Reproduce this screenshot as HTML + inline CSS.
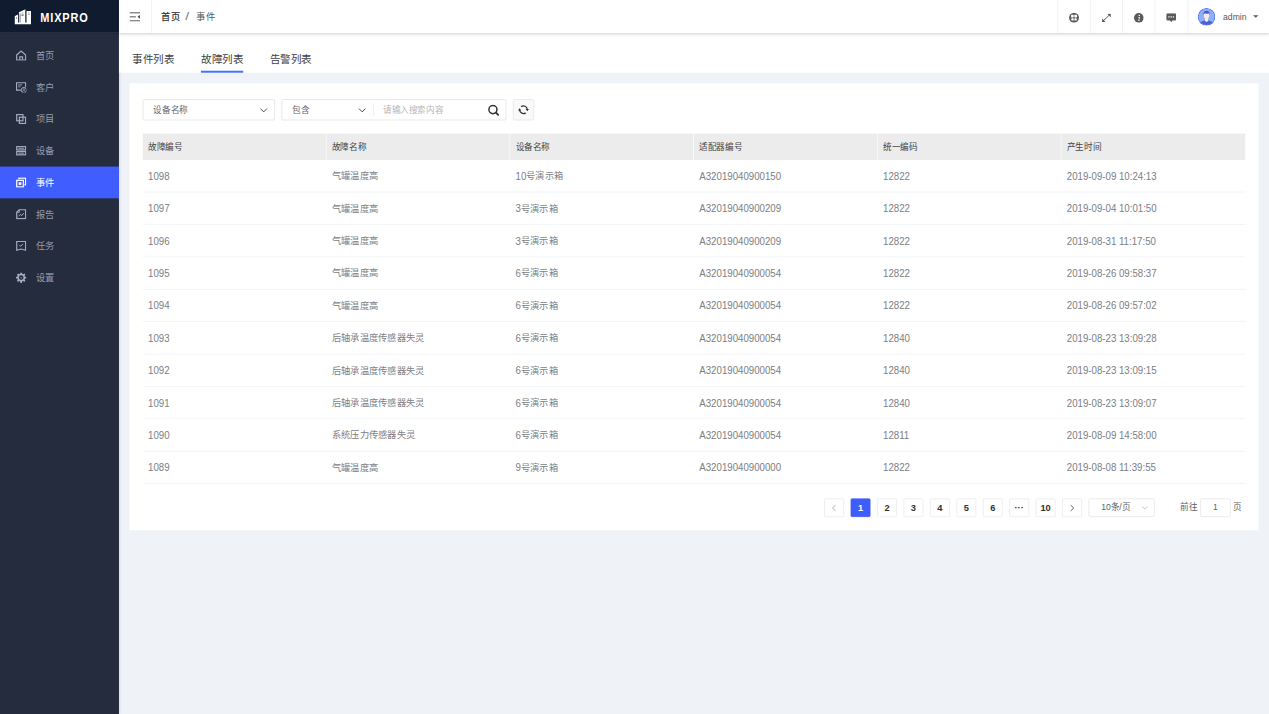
<!DOCTYPE html>
<html lang="zh-CN">
<head>
<meta charset="utf-8">
<title>MIXPRO</title>
<style>
*{box-sizing:border-box;margin:0;padding:0}
html,body{width:1269px;height:714px;overflow:hidden;background:#eff2f7}
body{font-family:"Liberation Sans",sans-serif;font-size:14px;color:#606266}
#app{position:absolute;left:0;top:0;width:1920px;height:1080px;transform-origin:0 0;transform:scale(0.66094,0.66111);background:#eff2f7;overflow:hidden}

/* sidebar */
.side{position:absolute;left:0;top:0;width:180px;height:1080px;background:#242c3d;box-shadow:1px 0 4px rgba(0,21,41,.10);z-index:1}
.logo{position:absolute;left:0;top:0;width:180px;height:48.600px;background:#111b2f;border-bottom:1.200px solid #323d52;box-sizing:content-box}
.logo svg{position:absolute;left:22px;top:13.500px}
.logo b{position:absolute;left:61px;top:13.500px;font-size:20px;line-height:26px;color:#fff;letter-spacing:1.500px;font-weight:bold;transform-origin:0 50%;transform:scaleX(.83);white-space:nowrap}
.menu{position:absolute;left:0;top:60px;width:180px;list-style:none}
.menu li{position:relative;height:48px;line-height:48px;color:#959db1;font-size:14px;padding-left:54px}
.menu li svg{position:absolute;left:24px;top:16px;color:#a3abbe}
.menu li.on svg{color:#fff}
.menu li.on{background:#405dff;color:#fff}

/* header */
.head{position:absolute;left:180px;top:0;width:1740px;height:50px;background:#fff;box-shadow:0 1px 3px rgba(0,0,0,.150),0 3px 8px rgba(0,0,0,.060);z-index:3}
.ham{position:absolute;left:0;top:0;width:49.500px;height:50px;border-right:1px solid #ececec}
.ham svg{position:absolute;left:16px;top:17.500px}
.crumb{position:absolute;left:64px;top:0;line-height:50px;font-size:14px;color:#303133;font-weight:normal;-webkit-text-stroke:.300px #303133;white-space:nowrap}
.crumb u{text-decoration:none;font-weight:normal;color:#55585e;-webkit-text-stroke:0}
.crumb i{font-style:normal;font-weight:normal;color:#70747c;margin:0 12px 0 8.500px;font-size:16px;display:inline-block;transform:scaleX(1.3);-webkit-text-stroke:0}
.hr{position:absolute;right:0;top:0;height:50px;display:flex}
.hr .c{width:49.200px;height:50px;border-left:1px solid #ececec;position:relative}
.hr .c svg{position:absolute;left:50%;top:26.500px;transform:translate(-50%,-50%)}
.hr .u{width:123.500px;height:50px;border-left:1px solid #ececec;position:relative}
.hr .u .av{position:absolute;left:14px;top:11.500px;width:27px;height:27px;border-radius:50%;overflow:hidden}
.hr .u .av svg{width:27px;height:27px;display:block}
.hr .u span{position:absolute;left:53px;top:1.500px;line-height:50px;font-size:13px;color:#55585e}
.hr .u em{position:absolute;left:98.500px;top:23px;border:4.400px solid transparent;border-top:4.600px solid #555;border-bottom:0}

/* tabs */
.tabs{position:absolute;left:180px;top:50px;width:1740px;height:60px;background:#fff;z-index:2}
.tabs span{position:absolute;top:29.500px;font-size:16px;line-height:22px;color:#3f4247}
.tabs .line{position:absolute;left:124px;top:57px;width:64px;height:3px;background:#4474f5}

/* card */
.card{position:absolute;left:196px;top:126px;width:1708px;height:676px;background:#fff}

.sel{position:absolute;top:24px;height:32px;border:1px solid #dedede;border-radius:2px;background:#fff;font-size:13px;line-height:30px;color:#64666a}
.sel span{position:absolute;left:15px;top:.500px}
.s1{left:20px;width:200px}
.s1>svg{position:absolute;left:176px;top:12px}
.s2{left:230px;width:340px}
.s2>svg{position:absolute;left:115px;top:12px}
.s2 i{position:absolute;left:138px;top:5px;width:1px;height:20px;background:#e6e6e6}
.s2 em{position:absolute;left:152.500px;top:.500px;font-style:normal;color:#b6b6b6}
.s2 .mag{position:absolute;left:311px;top:6.500px}
.ref{position:absolute;left:580px;top:24px;width:32px;height:32px;border:1px solid #e2e2e2;border-radius:2px;background:#f9f9f9}
.ref svg{position:absolute;left:6px;top:6px}
.tb{position:absolute;left:20px;top:76px;width:1668px;border-collapse:separate;border-spacing:0;table-layout:fixed}
.tb th{height:40px;background:#ececec;color:#43464b;font-size:13px;font-weight:normal;text-align:left;padding:0 0 2px 8px;border-right:1px solid #fff}
.tb th:last-child{border-right:0}
.tb td{height:49px;border-bottom:1px solid #ebeef5;padding:0 0 0 8px;font-size:14px;color:#6c6f76;text-align:left}
.tb td{color:#7d8086}
.tb td:not(.n){padding-bottom:3px}
.tb td.n{font-size:14.500px;color:#7b7e84}
.tb td s{display:inline-block;font-size:14.500px;text-decoration:none;transform-origin:0 50%;transform:translateY(.300px) scale(1.01,1.160)}
.pg{position:absolute;right:25px;top:628px;height:28px;display:flex;align-items:center;font-size:13px;color:#606266}
.pg b{min-width:30px;height:28px;line-height:26px;margin:0 5px;border:1px solid #e6e6e6;border-radius:2px;text-align:center;font-size:14px;color:#303133;background:#fff;padding:0 3px}
.pg b.on{background:#3f5dfb;border-color:#3f5dfb;color:#fff}
.pg b.ar{position:relative}
.pg b.ar svg{position:absolute;left:10px;top:8px}
.pg .sz{position:relative;width:100px;height:28px;line-height:26px;border:1px solid #e0e0e0;border-radius:3px;margin:0 10px 0 5px;padding-left:18px;color:#606266}
.pg .sz svg{position:absolute;right:9px;top:10px}
.pg .go{margin-left:29px;position:relative;top:-2px}
.pg .go2{position:relative;top:-2px}
.pg .ed{width:46px;height:28px;line-height:26px;border:1px solid #e0e0e0;border-radius:3px;text-align:center;margin:0 4px 0 4px}
</style>
</head>
<body>
<div id="app">
  <div class="side">
    <div class="logo"><svg width="25" height="23" viewBox="0 0 25 23"><path d="M0 10.5L5.2 8v12.5H0z M6.6 4.6L16.6 0v20.5H6.6z M18 2.6h7V20.5h-7z M0 20h25v3H0z" fill="#fff"/><path d="M2.2 12.6h1.4v1.6H2.2z M10.6 5.2h3v1h-3z M10.6 7h3v1h-3z M10.6 8.8h3v1h-3z M20.6 5.2h2.4v1h-2.4z M20.6 7h2.4v1h-2.4z" fill="#111b2f" opacity=".75"/><path d="M8.4 6.5v13.5 M16.9 2v18" stroke="#111b2f" stroke-width=".9"/></svg><b>MIXPRO</b></div>
    <ul class="menu">
      <li><svg width="16" height="16" viewBox="0 0 16 16" fill="none" stroke="currentColor" stroke-width="1.800" stroke-linejoin="miter"><path d="M1.200 7.100L8 1.200l6.800 5.900v7.700H1.200z"/><path d="M5.900 14.800V10h4.200v4.800" stroke-width="1.700"/></svg>首页</li><li><svg width="16" height="16" viewBox="0 0 16 16" fill="none" stroke="currentColor" stroke-width="1.800" stroke-linejoin="miter"><path d="M7.400 12.200H1V1.200h13.800v6.400"/><path d="M3.600 4.500h5.600M3.600 7.300h3.200" stroke-width="1.400"/><circle cx="12.100" cy="12.300" r="4.100" stroke-width="1.400"/><circle cx="12.100" cy="11.100" r="1.200" stroke-width="1"/><path d="M9.600 15c.4-1.400 1.400-2 2.500-2s2.100.6 2.500 2" stroke-width="1"/></svg>客户</li><li><svg width="16" height="16" viewBox="0 0 16 16" fill="none" stroke="currentColor" stroke-width="1.800" stroke-linejoin="miter"><rect x="1.3" y="1.3" width="9.4" height="9.4"/><rect x="5.3" y="5.3" width="9.4" height="9.4"/></svg>项目</li><li><svg width="16" height="16" viewBox="0 0 16 16" fill="none" stroke="currentColor" stroke-width="1.800" stroke-linejoin="miter"><rect x="1.3" y="1.8" width="13.4" height="5"/><rect x="1.3" y="9.2" width="13.4" height="5"/><path d="M3.800 4.300h8.400M3.800 11.700h8.400" stroke-width="1.400"/></svg>设备</li><li class="on"><svg width="16" height="16" viewBox="0 0 16 16" fill="none" stroke="currentColor" stroke-width="1.800" stroke-linejoin="miter"><rect x="1.3" y="4.7" width="10" height="10"/><rect x="4.3" y="7.7" width="4" height="4" fill="currentColor" stroke="none"/><path d="M4.4 3.2V1.3h10.3v10.3h-1.9"/></svg>事件</li><li><svg width="16" height="16" viewBox="0 0 16 16" fill="none" stroke="currentColor" stroke-width="1.800" stroke-linejoin="miter"><path d="M5 1.3h9.7v13.4H1.3V5z"/><path d="M5.200 1.500v3.700H1.500" stroke-width="1.300"/><path d="M4 11.200l3-3 2 1.800 3-3.600" stroke-width="1.500"/></svg>报告</li><li><svg width="16" height="16" viewBox="0 0 16 16" fill="none" stroke="currentColor" stroke-width="1.800" stroke-linejoin="miter"><path d="M1.300 1.300h13.400v13.300L8 12.700l-6.700 1.900z"/><path d="M5.200 6.600l2 2 3.600-3.800" stroke-width="1.500"/></svg>任务</li><li><svg width="16" height="16" viewBox="0 0 16 16" fill="none" stroke="currentColor" stroke-width="1.800" stroke-linejoin="miter"><path d="M6.58 2.07 L6.75 0.10 L9.25 0.10 L9.42 2.07 L11.19 2.80 L12.70 1.53 L14.47 3.30 L13.20 4.81 L13.93 6.58 L15.90 6.75 L15.90 9.25 L13.93 9.42 L13.20 11.19 L14.47 12.70 L12.70 14.47 L11.19 13.20 L9.42 13.93 L9.25 15.90 L6.75 15.90 L6.58 13.93 L4.81 13.20 L3.30 14.47 L1.53 12.70 L2.80 11.19 L2.07 9.42 L0.10 9.25 L0.10 6.75 L2.07 6.58 L2.80 4.81 L1.53 3.30 L3.30 1.53 L4.81 2.80z M8 4.500a3.500 3.500 0 1 0 .001 0z" fill="currentColor" fill-rule="evenodd" stroke="none"/><circle cx="8" cy="8" r="1.400" fill="currentColor" stroke="none" opacity=".600"/></svg>设置</li>
    </ul>
  </div>
  <div class="head">
    <div class="ham"><svg width="16" height="15" viewBox="0 0 16 15"><path d="M0 1.400h16M0 7.460h9.600M0 13.500h16" stroke="#555" stroke-width="1.5" fill="none"/><path d="M16 4.400v6.200L12 7.460z" fill="#555"/></svg></div>
    <div class="crumb">首页<i>/</i><u>事件</u></div>
    <div class="hr">
      <div class="c"><svg width="15" height="15" viewBox="0 0 15 15"><circle cx="7.5" cy="7.5" r="7.5" fill="#5a5a5a"/><rect x="3" y="3" width="4" height="4" rx="1" fill="#fff"/><rect x="8" y="3" width="4" height="4" rx="1" fill="#fff"/><rect x="3.4" y="8" width="3.6" height="3.6" rx="1" fill="#fff"/><rect x="8" y="8" width="3.6" height="3.6" rx="1" fill="#fff"/></svg></div><div class="c"><svg width="14" height="13" viewBox="0 0 14 13"><path d="M2.2 11L11.8 2" stroke="#5a5a5a" stroke-width="1.5"/><path d="M8.2 0.4H13.6V5.6z M0.4 7.4V12.6H5.8z" fill="#5a5a5a"/></svg></div><div class="c"><svg width="15" height="15" viewBox="0 0 15 15"><circle cx="7.5" cy="7.5" r="7.3" fill="#5a5a5a"/><circle cx="8.300" cy="4" r="1.100" fill="#fff"/><path d="M6.400 6.300h2.700L8.200 11h.9l-.15.800H6l.15-.800h.9l.7-3.900h-1.500z" fill="#fff"/></svg></div><div class="c"><svg width="15" height="14" viewBox="0 0 15 14"><path d="M2 0h11a2 2 0 0 1 2 2v7a2 2 0 0 1-2 2H9.4L7.5 13.6 5.6 11H2a2 2 0 0 1-2-2V2a2 2 0 0 1 2-2z" fill="#5a5a5a"/><rect x="3.1" y="4.7" width="2" height="1.8" fill="#fff"/><rect x="6.5" y="4.7" width="2" height="1.8" fill="#fff"/><rect x="9.9" y="4.7" width="2" height="1.8" fill="#fff"/></svg></div>
      <div class="u"><div class="av"><svg width="26" height="26" viewBox="0 0 26 26"><circle cx="13" cy="13" r="13" fill="#4f6dfb"/><circle cx="13" cy="13" r="11.7" fill="#8eb0fb"/><clipPath id="avc"><circle cx="13" cy="13" r="11.7"/></clipPath><g clip-path="url(#avc)"><path d="M2 26c0-5 4.500-6.800 8.300-7.600L13 20.200l2.700-1.800c3.800.8 8.300 2.600 8.300 7.600z" fill="#4a63c6"/><path d="M8.900 10.200c0-3 1.500-4.800 4.100-4.800s4.100 1.800 4.100 4.800c0 1.700-.5 3.300-1.200 4.500-.5.900-.9 1.500-.9 2.400l.5 1.600L13 20.400l-2.500-1.700.5-1.600c0-.9-.4-1.500-.9-2.400-.7-1.200-1.200-2.800-1.200-4.500z" fill="#f6ebe8"/><path d="M8.600 11c-.9-4 1-6.800 4.400-6.800 3.700 0 5.300 2.700 4.400 6.800-.2-1.400-.5-2.300-1.100-2.900-1.600.4-3.900.3-5.700-.5-1.100.7-1.700 1.700-2 3.400z" fill="#4460c4"/></g></svg></div><span>admin</span><em></em></div>
    </div>
  </div>
  <div class="tabs">
    <span style="left:20px">事件列表</span><span style="left:124px">故障列表</span><span style="left:228px">告警列表</span>
    <div class="line"></div>
  </div>
  <div class="card">
    <div class="sel s1"><span>设备名称</span><svg width="12" height="8" viewBox="0 0 12 8"><path d="M1 1.200l5 5 5-5" fill="none" stroke="#3a3a3a" stroke-width="1.400"/></svg></div>
    <div class="sel s2"><span>包含</span><svg width="12" height="8" viewBox="0 0 12 8"><path d="M1 1.200l5 5 5-5" fill="none" stroke="#3a3a3a" stroke-width="1.400"/></svg><i></i><em>请输入搜索内容</em>
      <svg class="mag" width="18" height="18" viewBox="0 0 18 18"><circle cx="7.800" cy="7.800" r="6.100" fill="none" stroke="#333" stroke-width="2.300"/><path d="M12.400 12.400l3.300 3.300" stroke="#333" stroke-width="2.900" stroke-linecap="round"/></svg></div>
    <div class="ref"><svg width="18" height="18" viewBox="0 0 18 18"><path d="M5.430 4.430A5.800 5.800 0 0 1 14.800 8.600M12.330 13.750A5.800 5.800 0 0 1 3.200 9.400" fill="none" stroke="#333" stroke-width="2"/><path d="M12.300 8h5l-2.500 3.300zM0.700 10h5L3.200 6.700z" fill="#333"/></svg></div>
<table class="tb">
<thead><tr><th>故障编号</th><th>故障名称</th><th>设备名称</th><th>适配器编号</th><th>统一编码</th><th>产生时间</th></tr></thead>
<tbody>
<tr><td class="n"><s>1098</s></td><td>气罐温度高</td><td><s>10</s>号演示箱</td><td class="n"><s>A32019040900150</s></td><td class="n"><s>12822</s></td><td class="n"><s>2019-09-09 10:24:13</s></td></tr>
<tr><td class="n"><s>1097</s></td><td>气罐温度高</td><td><s>3</s>号演示箱</td><td class="n"><s>A32019040900209</s></td><td class="n"><s>12822</s></td><td class="n"><s>2019-09-04 10:01:50</s></td></tr>
<tr><td class="n"><s>1096</s></td><td>气罐温度高</td><td><s>3</s>号演示箱</td><td class="n"><s>A32019040900209</s></td><td class="n"><s>12822</s></td><td class="n"><s>2019-08-31 11:17:50</s></td></tr>
<tr><td class="n"><s>1095</s></td><td>气罐温度高</td><td><s>6</s>号演示箱</td><td class="n"><s>A32019040900054</s></td><td class="n"><s>12822</s></td><td class="n"><s>2019-08-26 09:58:37</s></td></tr>
<tr><td class="n"><s>1094</s></td><td>气罐温度高</td><td><s>6</s>号演示箱</td><td class="n"><s>A32019040900054</s></td><td class="n"><s>12822</s></td><td class="n"><s>2019-08-26 09:57:02</s></td></tr>
<tr><td class="n"><s>1093</s></td><td>后轴承温度传感器失灵</td><td><s>6</s>号演示箱</td><td class="n"><s>A32019040900054</s></td><td class="n"><s>12840</s></td><td class="n"><s>2019-08-23 13:09:28</s></td></tr>
<tr><td class="n"><s>1092</s></td><td>后轴承温度传感器失灵</td><td><s>6</s>号演示箱</td><td class="n"><s>A32019040900054</s></td><td class="n"><s>12840</s></td><td class="n"><s>2019-08-23 13:09:15</s></td></tr>
<tr><td class="n"><s>1091</s></td><td>后轴承温度传感器失灵</td><td><s>6</s>号演示箱</td><td class="n"><s>A32019040900054</s></td><td class="n"><s>12840</s></td><td class="n"><s>2019-08-23 13:09:07</s></td></tr>
<tr><td class="n"><s>1090</s></td><td>系统压力传感器失灵</td><td><s>6</s>号演示箱</td><td class="n"><s>A32019040900054</s></td><td class="n"><s>12811</s></td><td class="n"><s>2019-08-09 14:58:00</s></td></tr>
<tr><td class="n"><s>1089</s></td><td>气罐温度高</td><td><s>9</s>号演示箱</td><td class="n"><s>A32019040900000</s></td><td class="n"><s>12822</s></td><td class="n"><s>2019-08-08 11:39:55</s></td></tr>
</tbody></table>
    <div class="pg">
      <b class="ar"><svg width="8" height="11" viewBox="0 0 8 11"><path d="M6.200 1L1.500 5.500l4.700 4.500" fill="none" stroke="#a4a4a4" stroke-width="1.300"/></svg></b><b class="on">1</b><b>2</b><b>3</b><b>4</b><b>5</b><b>6</b><b>···</b><b>10</b><b class="ar"><svg width="8" height="11" viewBox="0 0 8 11"><path d="M1.800 1l4.700 4.500L1.800 10" fill="none" stroke="#44474d" stroke-width="1.300"/></svg></b>
      <div class="sz">10条/页<svg width="10" height="6" viewBox="0 0 10 6"><path d="M1 1l4 4 4-4" fill="none" stroke="#b4b8c0" stroke-width="1.2"/></svg></div>
      <span class="go">前往</span><div class="ed">1</div><span class="go2">页</span>
    </div>
  </div>
</div>
</body>
</html>
